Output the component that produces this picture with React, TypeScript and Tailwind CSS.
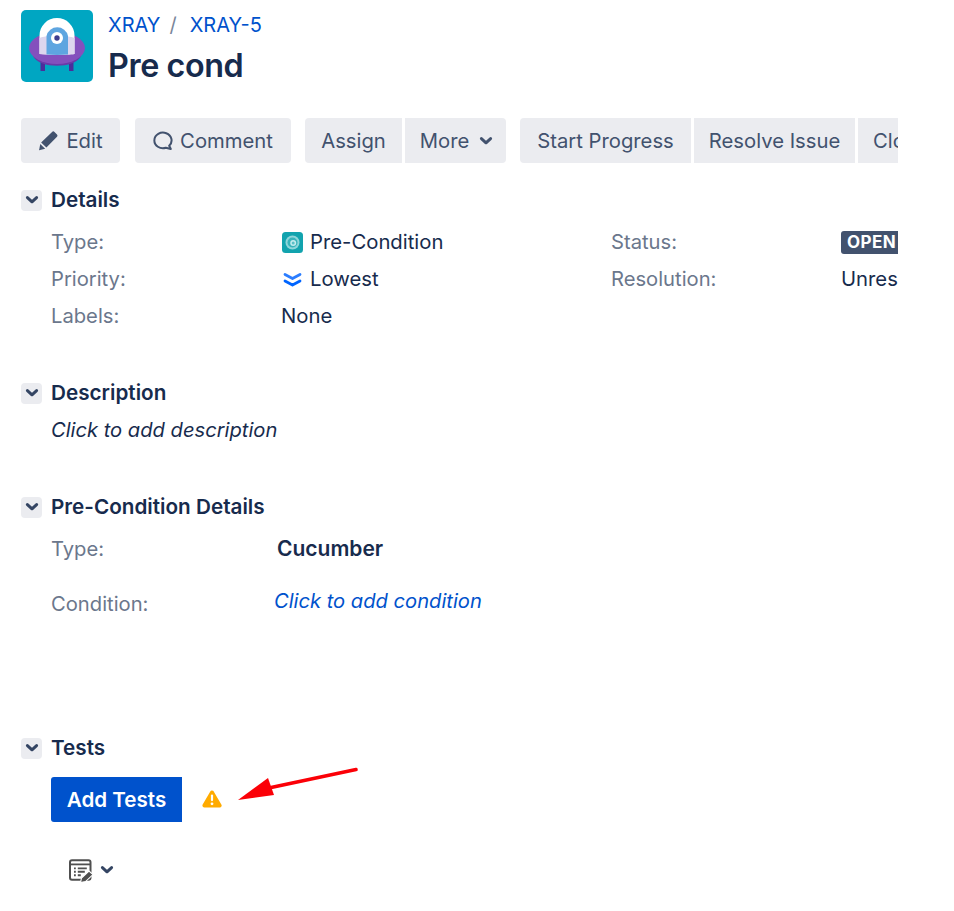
import React from "react";

const Chevron = ({ className = "" }: { className?: string }) => (
  <svg viewBox="0 0 14 10" className={className} fill="none">
    <path d="M2.4 2.6 L7 6.8 L11.6 2.6" stroke="currentColor" strokeWidth="3" strokeLinecap="round" strokeLinejoin="round" />
  </svg>
);

const Heading = ({ title, className = "" }: { title: string; className?: string }) => (
  <div className={`flex items-center h-[24px] ${className}`}>
    <span className="w-[21px] h-[21px] rounded-[4px] bg-[#ebecf0] flex items-center justify-center text-[#344563]">
      <Chevron className="w-[14px] h-[10px]" />
    </span>
    <h2 className="ml-[9px] text-[20.7px] font-semibold text-[#172b4d] leading-[24px]">{title}</h2>
  </div>
);

const Btn = ({ children, className = "" }: { children: React.ReactNode; className?: string }) => (
  <div className={`h-[45px] shrink-0 bg-[#ebecf0] text-[#42526e] text-[20.25px] pt-[1px] flex items-center justify-center ${className}`}>
    {children}
  </div>
);

const Logo = () => (
  <svg viewBox="0 0 72 72" className="w-[72px] h-[72px] shrink-0">
    <rect width="72" height="72" rx="5" fill="#00a6c2" />
    <rect x="19.5" y="50" width="4.5" height="11" fill="#4a2e9c" />
    <rect x="48" y="50" width="4.5" height="11" fill="#4a2e9c" />
    <path d="M12 46 C18 59 54 59 60 46 L50 40 H22 Z" fill="#6a3aa8" />
    <ellipse cx="36" cy="38" rx="28" ry="16" fill="#8450bd" />
    <path d="M18.5 44 V25.5 A17.5 17.5 0 0 1 53.5 25.5 V44 C46 45 26 45 18.5 44 Z" fill="#ffffff" />
    <path d="M18.5 44 V28 C24 25 47 25 53.5 28 V44 C46 45 26 45 18.5 44 Z" fill="#ddd6ee" />
    <path d="M25.5 44.6 V26 A11 11 0 0 1 47 26 V44.6 C40 45 32 45 25.5 44.6 Z" fill="#5ea5e0" />
    <circle cx="36" cy="28" r="6" fill="#ffffff" />
    <circle cx="36" cy="28" r="2.7" fill="#3f3d8f" />
  </svg>
);

const PreIcon = () => (
  <svg viewBox="0 0 21 21" className="w-[21px] h-[21px] shrink-0">
    <rect width="21" height="21" rx="3.5" fill="#12a3ae" />
    <circle cx="10.5" cy="10.5" r="7" fill="#8fd6da" />
    <circle cx="10.5" cy="10.5" r="5" fill="#38b3bb" />
    <circle cx="11.2" cy="11" r="3" fill="#c5ecee" />
    <circle cx="11.2" cy="11" r="1.5" fill="#5cc0c7" />
  </svg>
);

const Lowest = () => (
  <svg viewBox="0 0 21 18" className="w-[21px] h-[18px] shrink-0" fill="none">
    <path d="M3 3.5 L10.5 7.5 L18 3.5" stroke="#2b7dff" strokeWidth="2.8" strokeLinecap="round" strokeLinejoin="round" />
    <path d="M3 10 L10.5 14 L18 10" stroke="#0065ff" strokeWidth="2.8" strokeLinecap="round" strokeLinejoin="round" />
  </svg>
);

const Label = ({ children, className = "" }: { children: React.ReactNode; className?: string }) => (
  <span className={`text-[20.2px] shrink-0 text-[#6b778c] ${className}`}>{children}</span>
);

export default function App() {
  return (
    <div
      className="relative w-[954px] h-[911px] bg-white overflow-hidden text-[#172b4d] text-[20.3px]"
      style={{ fontFamily: "Inter, 'Liberation Sans', sans-serif" }}
    >
      <div className="w-[898px] pl-[21px] pt-[10px] overflow-hidden">
        <header className="flex h-[72px]">
          <Logo />
          <div className="ml-[15px] flex flex-col">
            <div className="mt-[2px] h-[26px] flex items-center text-[20px] text-[#0052cc] leading-[26px]">
              <span>XRAY</span>
              <span className="ml-[9px] mr-[13px] text-[#7a869a]">/</span>
              <span>XRAY-5</span>
            </div>
            <h1 className="mt-[6px] text-[32.3px] leading-[44px] font-semibold tracking-[-0.4px] text-[#172b4d]">Pre cond</h1>
          </div>
        </header>

        <div className="mt-[36px] flex">
          <Btn className="w-[99px] rounded-[4px] gap-[7px]">
            <svg viewBox="0 0 20 20" className="w-[21px] h-[21px] -mt-[1px]" fill="#42526e">
              <path d="M13.4 1.8 a1.6 1.6 0 0 1 2.3 0 l2.4 2.4 a1.6 1.6 0 0 1 0 2.2 L8 16.6 3 12 Z" />
              <path d="M2.2 13.4 L6.8 17.8 L1 19.4 Z" />
            </svg>
            Edit
          </Btn>
          <Btn className="ml-[15px] w-[156px] rounded-[4px] gap-[7px] pr-[2px]">
            <svg viewBox="0 0 22 22" className="w-[22px] h-[22px]" fill="none">
              <path d="M19.8 19 L18.2 15.8 A8.6 7.8 0 1 0 14.8 17.8 Z" stroke="#42526e" strokeWidth="2" strokeLinejoin="round" />
            </svg>
            Comment
          </Btn>
          <Btn className="ml-[14px] w-[97px] rounded-l-[4px]">Assign</Btn>
          <Btn className="ml-[3px] w-[101px] rounded-r-[4px] gap-[10px] pl-[2px]">
            More
            <Chevron className="w-[14px] h-[10px]" />
          </Btn>
          <Btn className="ml-[14px] w-[171px] rounded-l-[4px]">Start Progress</Btn>
          <Btn className="ml-[3px] w-[161px]">Resolve Issue</Btn>
          <Btn className="ml-[3px] w-[100px] !justify-start pl-[15px]">Close</Btn>
        </div>

        <Heading title="Details" className="mt-[25px]" />
        <div className="pl-[30px]">
          <div className="mt-[12px] flex items-center h-[37px]">
            <Label className="w-[231px]">Type:</Label>
            <div className="w-[329px] shrink-0 flex items-center gap-[7px]"><PreIcon />Pre-Condition</div>
            <Label className="w-[230px]">Status:</Label>
            <span className="h-[23px] px-[6px] rounded-[3px] bg-[#42526e] text-white text-[17px] font-bold flex items-center tracking-[0.4px] shrink-0">OPEN</span>
          </div>
          <div className="flex items-center h-[37px]">
            <Label className="w-[231px]">Priority:</Label>
            <div className="w-[329px] shrink-0 flex items-center gap-[7px]"><Lowest />Lowest</div>
            <Label className="w-[230px]">Resolution:</Label>
            <span className="whitespace-nowrap shrink-0">Unresolved</span>
          </div>
          <div className="flex items-center h-[37px]">
            <Label className="w-[230px]">Labels:</Label>
            <span>None</span>
          </div>
        </div>

        <Heading title="Description" className="mt-[46px]" />
        <p className="pl-[30px] mt-[13px] italic text-[20.15px] leading-[24px]">Click to add description</p>

        <Heading title="Pre-Condition Details" className="mt-[53px]" />
        <div className="pl-[30px]">
          <div className="mt-[18px] flex items-center h-[24px]">
            <Label className="w-[226px]">Type:</Label>
            <b className="font-semibold text-[21px]">Cucumber</b>
          </div>
          <div className="mt-[28px] flex h-[30px]">
            <Label className="w-[223px] pt-[3px] leading-[24px]">Condition:</Label>
            <i className="text-[#0052cc] text-[20.15px] leading-[24px]">Click to add condition</i>
          </div>
        </div>

        <Heading title="Tests" className="mt-[117px]" />
        <div className="pl-[30px] mt-[17px] flex items-center">
          <div className="w-[131px] h-[45px] pt-[1px] rounded-l-[3px] bg-[#0052cc] text-white font-semibold text-[20.6px] flex items-center justify-center">Add Tests</div>
          <svg viewBox="0 0 20 18" className="ml-[20px] w-[20px] h-[18px] -mt-[1px]">
            <path d="M10 2.5 L17.6 15.5 H2.4 Z" fill="#ffab00" stroke="#ffab00" strokeWidth="4" strokeLinejoin="round" />
            <rect x="8.9" y="4.4" width="2.2" height="6.8" rx="1.1" fill="#fff" />
            <circle cx="10" cy="13.8" r="1.4" fill="#fff" />
          </svg>
        </div>
        <div className="pl-[48px] mt-[37px] flex">
          <svg viewBox="0 0 25 24" className="w-[25px] h-[24px]" fill="none">
            <rect x="1" y="1.2" width="20.5" height="19.5" rx="2" stroke="#4f4f4f" strokeWidth="2" />
            <path d="M1.5 5.4 H21" stroke="#4f4f4f" strokeWidth="1.8" />
            <path d="M5 9.4h1.8M5 12.8h1.8M5 16.2h1.8M8.8 9.4h9M8.8 12.8h7M8.8 16.2h3" stroke="#4f4f4f" strokeWidth="1.9" />
            <path d="M11.5 23.6 L12.5 19 L20 12 L24 15.6 L16.5 22.6 Z" fill="#4f4f4f" stroke="#fff" strokeWidth="1.1" />
          </svg>
          <Chevron className="ml-[6px] mt-[6px] w-[14px] h-[10px] text-[#344563]" />
        </div>
      </div>

      <svg viewBox="0 0 130 45" className="absolute left-[235px] top-[764px] w-[130px] h-[45px]">
        <path d="M121 5.5 L29 25" stroke="#fb0007" strokeWidth="3.6" strokeLinecap="round" />
        <path d="M3 36 L33 14 L39 31 Z" fill="#fb0007" />
      </svg>
    </div>
  );
}
